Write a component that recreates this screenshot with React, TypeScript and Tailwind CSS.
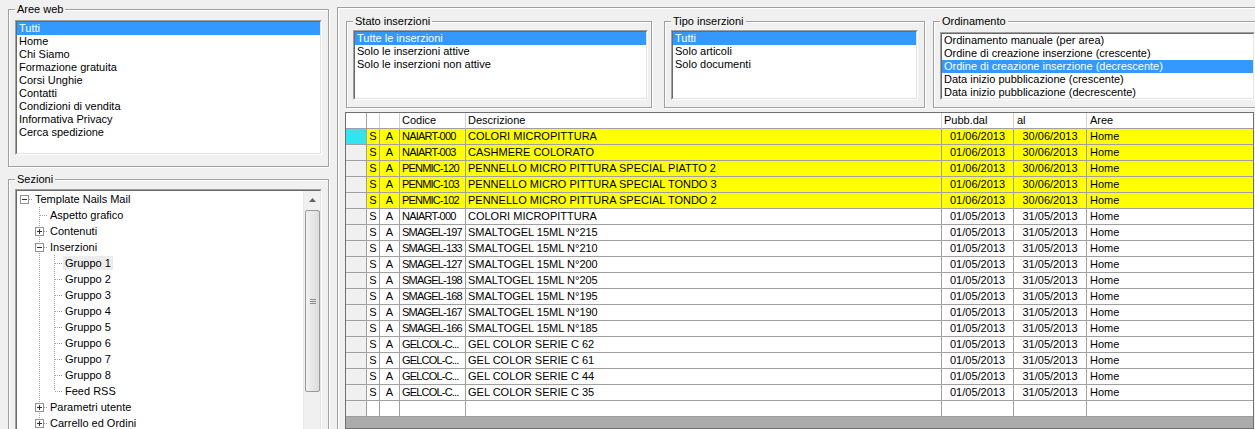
import React from "react";

type GroupProps = { label: string; className?: string; children: React.ReactNode };

function Group({ label, className = "", children }: GroupProps) {
  return (
    <fieldset
      className={`border border-[#a0a0a0] shadow-[inset_1px_1px_0_#ffffff,1px_1px_0_#ffffff] p-0 m-0 min-w-0 ${className}`}
    >
      <legend className="ml-[6px] px-[2px] leading-[15px] bg-[#f0f0f0]">{label}</legend>
      {children}
    </fieldset>
  );
}

function Sunken({ className = "", children }: { className?: string; children: React.ReactNode }) {
  return (
    <div className={`border border-t-[#a0a0a0] border-l-[#a0a0a0] border-r-white border-b-white ${className}`}>
      <div className="h-full w-full border border-t-[#696969] border-l-[#696969] border-r-[#e3e3e3] border-b-[#e3e3e3] bg-white overflow-hidden">
        {children}
      </div>
    </div>
  );
}

function ListBox({ items, selected, className = "" }: { items: string[]; selected: number; className?: string }) {
  return (
    <Sunken className={className}>
      {items.map((it, i) => (
        <div
          key={i}
          className={`h-[13px] leading-[13px] pl-[2px] whitespace-nowrap ${
            i === selected ? "bg-[#3399ff] text-white" : "text-black"
          }`}
        >
          {it}
        </div>
      ))}
    </Sunken>
  );
}

type TreeRow = {
  label: string;
  level: number;
  box?: "plus" | "minus";
  anc: boolean[];
  last?: boolean;
  root?: boolean;
  selected?: boolean;
};

const treeRows: TreeRow[] = [
  { label: "Template Nails Mail", level: 0, box: "minus", anc: [], root: true },
  { label: "Aspetto grafico", level: 1, anc: [false] },
  { label: "Contenuti", level: 1, box: "plus", anc: [false] },
  { label: "Inserzioni", level: 1, box: "minus", anc: [false] },
  { label: "Gruppo 1", level: 2, anc: [false, true], selected: true },
  { label: "Gruppo 2", level: 2, anc: [false, true] },
  { label: "Gruppo 3", level: 2, anc: [false, true] },
  { label: "Gruppo 4", level: 2, anc: [false, true] },
  { label: "Gruppo 5", level: 2, anc: [false, true] },
  { label: "Gruppo 6", level: 2, anc: [false, true] },
  { label: "Gruppo 7", level: 2, anc: [false, true] },
  { label: "Gruppo 8", level: 2, anc: [false, true] },
  { label: "Feed RSS", level: 2, anc: [false, true], last: true },
  { label: "Parametri utente", level: 1, box: "plus", anc: [false] },
  { label: "Carrello ed Ordini", level: 1, box: "plus", anc: [false] },
];

const DOT = "#a0a0a0";

function AncCell({ line }: { line: boolean }) {
  return (
    <svg width="15" height="16" className="shrink-0 block" shapeRendering="crispEdges">
      {line && <line x1="7.5" y1="0" x2="7.5" y2="16" stroke={DOT} strokeDasharray="1 1" />}
    </svg>
  );
}

function ConnCell({ row }: { row: TreeRow }) {
  return (
    <svg width="15" height="16" className="shrink-0 block" shapeRendering="crispEdges">
      {!row.root && (
        <line x1="7.5" y1="0" x2="7.5" y2={row.last ? 8 : 16} stroke={DOT} strokeDasharray="1 1" />
      )}
      <line x1="8" y1="8.5" x2="15" y2="8.5" stroke={DOT} strokeDasharray="1 1" />
      {row.box && (
        <g>
          <rect x="3.5" y="4.5" width="8" height="8" fill="#ffffff" stroke="#919191" />
          <line x1="5" y1="8.5" x2="10" y2="8.5" stroke="#333" />
          {row.box === "plus" && <line x1="7.5" y1="6" x2="7.5" y2="11" stroke="#333" />}
        </g>
      )}
    </svg>
  );
}

function Tree() {
  return (
    <Sunken className="ml-[6px] mr-[6px] h-[260px]">
      <div className="flex h-full">
        <div className="flex-1 min-w-0">
          {treeRows.map((r, i) => (
            <div key={i} className="flex items-center h-[16px]">
              {r.anc.map((a, j) => (
                <AncCell key={j} line={a} />
              ))}
              <ConnCell row={r} />
              <span
                className={`ml-[1px] px-[2px] leading-[14px] whitespace-nowrap ${
                  r.selected ? "bg-[#ececec]" : ""
                }`}
              >
                {r.label}
              </span>
            </div>
          ))}
        </div>
        <div className="w-[17px] bg-[#f0f0f0] flex flex-col border-l border-[#ececec]">
          <div className="h-[17px] flex items-center justify-center">
            <svg width="7" height="4" viewBox="0 0 7 4">
              <path d="M3.5 0 L7 4 L0 4 Z" fill="#606060" />
            </svg>
          </div>
          <div className="mt-[2px] ml-[1px] w-[15px] h-[182px] rounded-[2px] border border-[#9a9a9a] bg-gradient-to-r from-[#f2f2f2] to-[#dcdcdc] flex flex-col items-center justify-center gap-[1px]">
            <div className="w-[6px] h-[1px] bg-[#8a8a8a]" />
            <div className="w-[6px] h-[1px] bg-[#8a8a8a]" />
            <div className="w-[6px] h-[1px] bg-[#8a8a8a]" />
          </div>
        </div>
      </div>
    </Sunken>
  );
}

type DataRow = { code: string; desc: string; from: string; to: string; hl?: boolean };

const data: DataRow[] = [
  { code: "NAIART-000", desc: "COLORI MICROPITTURA", from: "01/06/2013", to: "30/06/2013", hl: true },
  { code: "NAIART-003", desc: "CASHMERE COLORATO", from: "01/06/2013", to: "30/06/2013", hl: true },
  { code: "PENMIC-120", desc: "PENNELLO MICRO PITTURA SPECIAL PIATTO 2", from: "01/06/2013", to: "30/06/2013", hl: true },
  { code: "PENMIC-103", desc: "PENNELLO MICRO PITTURA SPECIAL TONDO 3", from: "01/06/2013", to: "30/06/2013", hl: true },
  { code: "PENMIC-102", desc: "PENNELLO MICRO PITTURA SPECIAL TONDO 2", from: "01/06/2013", to: "30/06/2013", hl: true },
  { code: "NAIART-000", desc: "COLORI MICROPITTURA", from: "01/05/2013", to: "31/05/2013" },
  { code: "SMAGEL-197", desc: "SMALTOGEL 15ML N°215", from: "01/05/2013", to: "31/05/2013" },
  { code: "SMAGEL-133", desc: "SMALTOGEL 15ML N°210", from: "01/05/2013", to: "31/05/2013" },
  { code: "SMAGEL-127", desc: "SMALTOGEL 15ML N°200", from: "01/05/2013", to: "31/05/2013" },
  { code: "SMAGEL-198", desc: "SMALTOGEL 15ML N°205", from: "01/05/2013", to: "31/05/2013" },
  { code: "SMAGEL-168", desc: "SMALTOGEL 15ML N°195", from: "01/05/2013", to: "31/05/2013" },
  { code: "SMAGEL-167", desc: "SMALTOGEL 15ML N°190", from: "01/05/2013", to: "31/05/2013" },
  { code: "SMAGEL-166", desc: "SMALTOGEL 15ML N°185", from: "01/05/2013", to: "31/05/2013" },
  { code: "GELCOL-C...", desc: "GEL COLOR SERIE C 62", from: "01/05/2013", to: "31/05/2013" },
  { code: "GELCOL-C...", desc: "GEL COLOR SERIE C 61", from: "01/05/2013", to: "31/05/2013" },
  { code: "GELCOL-C...", desc: "GEL COLOR SERIE C 44", from: "01/05/2013", to: "31/05/2013" },
  { code: "GELCOL-C...", desc: "GEL COLOR SERIE C 35", from: "01/05/2013", to: "31/05/2013" },
];

const cell = "h-[16px] leading-[15px] border-r border-b border-[#a0a0a0] whitespace-nowrap overflow-hidden shrink-0";

function Grid() {
  return (
    <div className="ml-[7px] mt-[4px] w-[909px] flex-1 border border-[#6f6f6f] bg-[#ababab] flex flex-col">
      <div className="flex bg-white">
        <div className={`${cell} w-[21px] border-r-[#a0a0a0]`} />
        <div className={`${cell} w-[13px] border-r-[#d0d0d0]`} />
        <div className={`${cell} w-[20px] border-r-[#d0d0d0]`} />
        <div className={`${cell} w-[66px] px-[2px] border-r-[#d0d0d0]`}>Codice</div>
        <div className={`${cell} w-[476px] px-[2px] border-r-[#d0d0d0]`}>Descrizione</div>
        <div className={`${cell} w-[72px] px-[2px] border-r-[#d0d0d0]`}>Pubb.dal</div>
        <div className={`${cell} w-[73px] px-[3px] border-r-[#d0d0d0]`}>al</div>
        <div className={`${cell} flex-1 px-[3px] border-r-0`}>Aree</div>
      </div>
      {data.map((r, i) => {
        const bg = r.hl ? "bg-[#ffff00]" : "bg-white";
        return (
          <div key={i} className="flex">
            <div className={`${cell} w-[21px] ${i === 0 ? "bg-[#33e3ee]" : "bg-[#f0f0f0]"}`} />
            <div className={`${cell} w-[13px] text-center ${bg}`}>S</div>
            <div className={`${cell} w-[20px] text-center ${bg}`}>A</div>
            <div className={`${cell} w-[66px] pl-[2px] tracking-[-0.8px] ${bg}`}>{r.code}</div>
            <div className={`${cell} w-[476px] px-[2px] ${bg}`}>{r.desc}</div>
            <div className={`${cell} w-[72px] text-center ${bg}`}>{r.from}</div>
            <div className={`${cell} w-[73px] text-center ${bg}`}>{r.to}</div>
            <div className={`${cell} flex-1 px-[3px] border-r-0 ${bg}`}>Home</div>
          </div>
        );
      })}
      <div className="flex">
        <div className={`${cell} w-[21px] bg-[#f0f0f0]`} />
        <div className={`${cell} w-[13px] bg-white`} />
        <div className={`${cell} w-[20px] bg-white`} />
        <div className={`${cell} w-[66px] bg-white`} />
        <div className={`${cell} w-[476px] bg-white`} />
        <div className={`${cell} w-[72px] bg-white`} />
        <div className={`${cell} w-[73px] bg-white`} />
        <div className={`${cell} flex-1 border-r-0 bg-white`} />
      </div>
    </div>
  );
}

export default function App() {
  return (
    <div className="w-[1255px] h-[429px] overflow-hidden bg-[#f0f0f0] flex font-['Liberation_Sans',Arial,sans-serif] text-[11px] text-black">
      <div className="w-[333px] shrink-0 flex flex-col pl-[8px]">
        <Group label="Aree web" className="mt-[2px] w-[321px] pt-[3px] pb-[11px]">
          <ListBox
            className="ml-[6px] mr-[6px] h-[135px]"
            selected={0}
            items={[
              "Tutti",
              "Home",
              "Chi Siamo",
              "Formazione gratuita",
              "Corsi Unghie",
              "Contatti",
              "Condizioni di vendita",
              "Informativa Privacy",
              "Cerca spedizione",
            ]}
          />
        </Group>
        <Group label="Sezioni" className="mt-[5px] w-[321px] pt-[2px] pb-[10px]">
          <Tree />
        </Group>
      </div>
      <div className="ml-[4px] mt-[7px] flex-1 min-w-0 border-l border-t border-[#a0a0a0] shadow-[inset_1px_1px_0_#ffffff] flex flex-col">
        <div className="flex pl-[8px] pt-[6px]">
          <Group label="Stato inserzioni" className="w-[306px] h-[94px] shrink-0 pt-[1px]">
            <ListBox
              className="ml-[6px] mr-[3px] h-[70px]"
              selected={0}
              items={["Tutte le inserzioni", "Solo le inserzioni attive", "Solo le inserzioni non attive"]}
            />
          </Group>
          <Group label="Tipo inserzioni" className="ml-[12px] w-[261px] h-[94px] shrink-0 pt-[1px]">
            <ListBox
              className="ml-[6px] mr-[6px] h-[70px]"
              selected={0}
              items={["Tutti", "Solo articoli", "Solo documenti"]}
            />
          </Group>
          <Group label="Ordinamento" className="ml-[8px] w-[330px] h-[94px] shrink-0 pt-[3px]">
            <ListBox
              className="ml-[6px] w-[315px] h-[68px]"
              selected={2}
              items={[
                "Ordinamento manuale (per area)",
                "Ordine di creazione inserzione (crescente)",
                "Ordine di creazione inserzione (decrescente)",
                "Data inizio pubblicazione (crescente)",
                "Data inizio pubblicazione (decrescente)",
              ]}
            />
          </Group>
        </div>
        <Grid />
      </div>
    </div>
  );
}
